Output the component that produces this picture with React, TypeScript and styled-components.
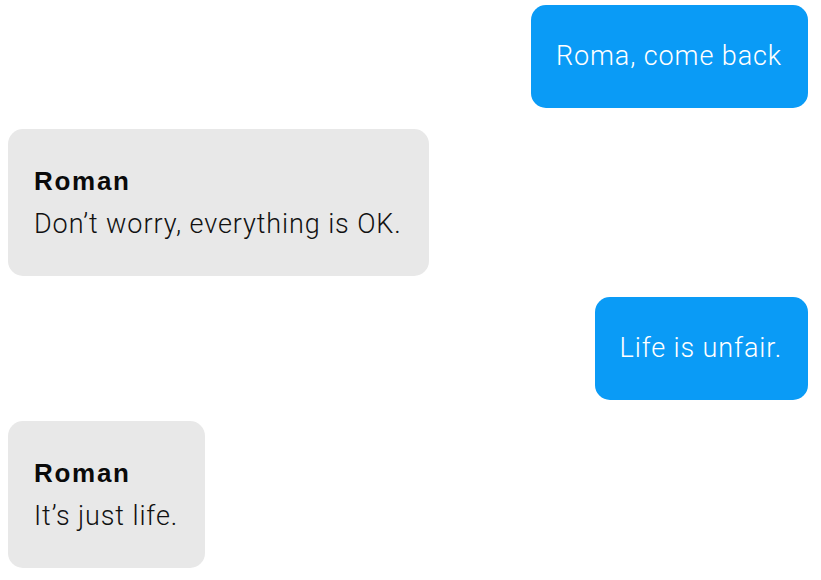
import React from "react";
import styled, { createGlobalStyle } from "styled-components";

const Global = createGlobalStyle`
  html, body { margin: 0; padding: 0; background: #ffffff; }
  body { font-family: "Roboto", "Liberation Sans", sans-serif; }
`;

const Thread = styled.div`
  display: flex;
  flex-direction: column;
  gap: 21px;
  padding: 5px 13px 0 8px;
`;

const Bubble = styled.div<{ $mine?: boolean }>`
  align-self: ${(p) => (p.$mine ? "flex-end" : "flex-start")};
  background: ${(p) => (p.$mine ? "#0a9bf6" : "#e8e8e8")};
  color: ${(p) => (p.$mine ? "#ffffff" : "#111111")};
  border-radius: 15px;
  padding: ${(p) => (p.$mine ? "30px 26px 30px 25px" : "31px 27px 30px 26px")};
  display: flex;
  flex-direction: column;
`;

const Sender = styled.div`
  font-family: "Liberation Sans", Arial, sans-serif;
  font-weight: 700;
  font-size: 26px;
  line-height: 43px;
  letter-spacing: 1.7px;
  color: #0a0a0a;
`;

const Text = styled.div`
  font-family: "Roboto", "Liberation Sans", sans-serif;
  font-weight: 300;
  font-size: 27px;
  line-height: 43px;
  letter-spacing: 0.9px;
  white-space: nowrap;
`;

type Msg = { mine: boolean; from?: string; text: string };

const messages: Msg[] = [
  { mine: true, text: "Roma, come back" },
  { mine: false, from: "Roman", text: "Don\u2019t worry, everything is OK." },
  { mine: true, text: "Life is unfair." },
  { mine: false, from: "Roman", text: "It\u2019s just life." },
];

export default function App() {
  return (
    <>
      <Global />
      <Thread>
        {messages.map((m, i) => (
          <Bubble key={i} $mine={m.mine}>
            {m.from && <Sender>{m.from}</Sender>}
            <Text>{m.text}</Text>
          </Bubble>
        ))}
      </Thread>
    </>
  );
}
